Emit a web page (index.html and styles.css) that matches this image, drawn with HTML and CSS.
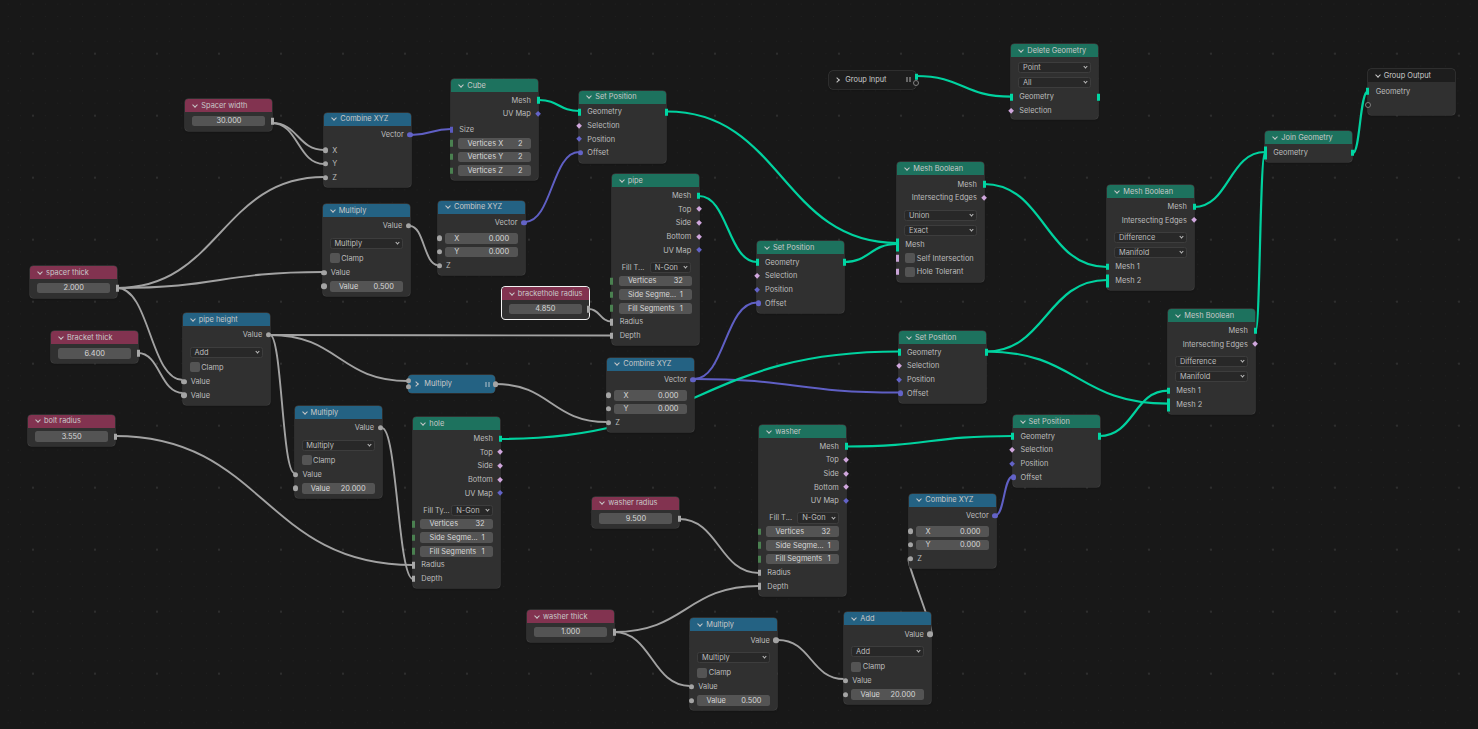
FILE: index.html
```html
<!DOCTYPE html>
<html lang="en">
<head>
<meta charset="utf-8">
<title>Geometry Nodes</title>
<link rel="stylesheet" href="styles.css">
</head>
<body>
<main class="canvas">
<svg class="wires" width="1478" height="729" viewBox="0 0 1478 729" fill="none">
  <g class="w-val">
    <path d="M272 123C298 123 298 150 324 150"/>
    <path d="M272 123C298 123 298 164 324 164"/>
    <path d="M117 288C220 288 221 177 324 177"/>
    <path d="M117 288C220 288 220 272 323 272"/>
    <path d="M117 288C150 288 150 380 183 380"/>
    <path d="M138 353C160 353 160 393 183 393"/>
    <path d="M270 335C440 335 440 335.500 612 335.500"/>
    <path d="M270 335C339 335 339 381 408 381"/>
    <path d="M270 335C282 335 282 473 294.500 473"/>
    <path d="M410 226C424 226 424 265 438 265"/>
    <path d="M382 428C397 428 398 579 413 579"/>
    <path d="M115 436C264 436 264 565 413 565"/>
    <path d="M589 309C600 309 600 321.500 612 321.500"/>
    <path d="M495 384C551 384 551 422 607 422"/>
    <path d="M679 519C719 519 719 573 759 573"/>
    <path d="M614 632C686 632 686 586 759 586"/>
    <path d="M614 632C652 632 652 686 690 686"/>
    <path d="M778 640C811 640 811 679 844 679"/>
    <path d="M931 634C936 634 904 558 909 558"/>
  </g>
  <g class="w-vec">
    <path d="M411 135C431 135 431 129 451 129"/>
    <path d="M525 222C552 222 552 152 579 152"/>
    <path d="M694 379C725 379 725 302.500 757 302.500"/>
    <path d="M694 379C796 379 796 392.500 899 392.500"/>
    <path d="M996 515C1004 515 1004 476.500 1012.500 476.500"/>
  </g>
  <g class="w-geo">
    <path d="M539 100C559 100 559 111 579.500 111"/>
    <path d="M667 111.500C782 111.500 782 243 897 243"/>
    <path d="M699 196C728 196 728 262 757 262"/>
    <path d="M844 262C870 262 870 244 897 244"/>
    <path d="M984 184C1045 184 1045 267 1107 267"/>
    <path d="M986 351.500C1046 351.500 1046 280 1107 280"/>
    <path d="M986 351.500C1077 351.500 1077 403.700 1168 403.700"/>
    <path d="M1099.500 436C1134 436 1134 390.700 1168 390.700"/>
    <path d="M500 439C700 439 700 351.500 899 351.500"/>
    <path d="M846 446.500C929 446.500 929 436 1012.500 436"/>
    <path d="M916 76C963 76 963 96.700 1011 96.700"/>
    <path d="M1194 207C1229 207 1229 152 1265 152"/>
    <path d="M1255.700 331C1260 331 1260 152 1265 152"/>
    <path d="M1353 153C1360 153 1360 91 1368 91"/>
  </g>
</svg>

<section class="node p-spacerw">
  <header class="hdr red"><i class="chev"></i>Spacer width</header>
  <div class="rows"><div class="row"><div class="field num">30.000</div><i class="s s-rect r"></i></div></div>
</section>

<section class="node p-comb1">
  <header class="hdr blue"><i class="chev"></i>Combine XYZ</header>
  <div class="rows">
    <div class="row out">Vector<i class="s s-vec r"></i></div>
    <div class="row in gap"><i class="s s-val l"></i>X</div>
    <div class="row in"><i class="s s-val l"></i>Y</div>
    <div class="row in"><i class="s s-val l"></i>Z</div>
  </div>
</section>

<section class="node p-mula">
  <header class="hdr blue"><i class="chev"></i>Multiply</header>
  <div class="rows">
    <div class="row out">Value<i class="s s-val r"></i></div>
    <div class="row tall gap"><div class="drop">Multiply<i class="arrow"></i></div></div>
    <div class="row tall in"><i class="box"></i>Clamp</div>
    <div class="row in"><i class="s s-val l"></i>Value</div>
    <div class="row"><i class="s s-val l"></i><div class="field pair"><span>Value</span><span>0.500</span></div></div>
  </div>
</section>

<section class="node p-spacert">
  <header class="hdr red"><i class="chev"></i>spacer thick</header>
  <div class="rows"><div class="row"><div class="field num">2.000</div><i class="s s-rect r"></i></div></div>
</section>

<section class="node p-bracket">
  <header class="hdr red"><i class="chev"></i>Bracket thick</header>
  <div class="rows"><div class="row"><div class="field num">6.400</div><i class="s s-rect r"></i></div></div>
</section>

<section class="node p-pipeh">
  <header class="hdr blue"><i class="chev"></i>pipe height</header>
  <div class="rows">
    <div class="row out">Value<i class="s s-val r"></i></div>
    <div class="row tall gap"><div class="drop">Add<i class="arrow"></i></div></div>
    <div class="row tall in"><i class="box"></i>Clamp</div>
    <div class="row in"><i class="s s-val l"></i>Value</div>
    <div class="row in"><i class="s s-val l"></i>Value</div>
  </div>
</section>

<section class="node p-bolt">
  <header class="hdr red"><i class="chev"></i>bolt radius</header>
  <div class="rows"><div class="row"><div class="field num">3.550</div><i class="s s-rect r"></i></div></div>
</section>

<section class="node p-mulb">
  <header class="hdr blue"><i class="chev"></i>Multiply</header>
  <div class="rows">
    <div class="row out">Value<i class="s s-val r"></i></div>
    <div class="row tall gap"><div class="drop">Multiply<i class="arrow"></i></div></div>
    <div class="row tall in"><i class="box"></i>Clamp</div>
    <div class="row in"><i class="s s-val l"></i>Value</div>
    <div class="row"><i class="s s-val l"></i><div class="field pair"><span>Value</span><span>20.000</span></div></div>
  </div>
</section>

<section class="node p-cube">
  <header class="hdr green"><i class="chev"></i>Cube</header>
  <div class="rows tight">
    <div class="row out">Mesh<i class="s s-geo r"></i></div>
    <div class="row out">UV Map<i class="s s-dia-b r"></i></div>
    <div class="row in gap">Size<i class="s s-rect-b l"></i></div>
    <div class="row"><i class="s s-int l"></i><div class="field pair"><span>Vertices X</span><span>2</span></div></div>
    <div class="row"><i class="s s-int l"></i><div class="field pair"><span>Vertices Y</span><span>2</span></div></div>
    <div class="row"><i class="s s-int l"></i><div class="field pair"><span>Vertices Z</span><span>2</span></div></div>
  </div>
</section>

<section class="node p-seta">
  <header class="hdr green"><i class="chev"></i>Set Position</header>
  <div class="rows tight">
    <div class="row in"><i class="s s-geo l"></i>Geometry<i class="s s-geo r"></i></div>
    <div class="row in"><i class="s s-dia l"></i>Selection</div>
    <div class="row in"><i class="s s-dia-b l"></i>Position</div>
    <div class="row in"><i class="s s-vec l"></i>Offset</div>
  </div>
</section>

<section class="node p-comb2">
  <header class="hdr blue"><i class="chev"></i>Combine XYZ</header>
  <div class="rows">
    <div class="row out">Vector<i class="s s-vec r"></i></div>
    <div class="row gap"><i class="s s-val l"></i><div class="field pair"><span>X</span><span>0.000</span></div></div>
    <div class="row"><i class="s s-val l"></i><div class="field pair"><span>Y</span><span>0.000</span></div></div>
    <div class="row in"><i class="s s-val l"></i>Z</div>
  </div>
</section>

<section class="node p-pipe">
  <header class="hdr green"><i class="chev"></i>pipe</header>
  <div class="rows tight">
    <div class="row out">Mesh<i class="s s-geo r"></i></div>
    <div class="row out">Top<i class="s s-dia r"></i></div>
    <div class="row out">Side<i class="s s-dia r"></i></div>
    <div class="row out">Bottom<i class="s s-dia r"></i></div>
    <div class="row out">UV Map<i class="s s-dia-b r"></i></div>
    <div class="row fill"><span class="fill-label">Fill T...</span><div class="drop fill-drop">N-Gon<i class="arrow"></i></div></div>
    <div class="row"><i class="s s-int l"></i><div class="field pair"><span>Vertices</span><span>32</span></div></div>
    <div class="row"><i class="s s-int l"></i><div class="field pair"><span>Side Segme...</span><span>1</span></div></div>
    <div class="row"><i class="s s-int l"></i><div class="field pair"><span>Fill Segments</span><span>1</span></div></div>
    <div class="row in"><i class="s s-rect l"></i>Radius</div>
    <div class="row in"><i class="s s-rect l"></i>Depth</div>
  </div>
</section>

<section class="node selected p-brack">
  <header class="hdr red"><i class="chev"></i>brackethole radius</header>
  <div class="rows"><div class="row"><div class="field num">4.850</div><i class="s s-rect r"></i></div></div>
</section>

<section class="node p-delete">
  <header class="hdr green"><i class="chev"></i>Delete Geometry</header>
  <div class="rows drops">
    <div class="row tall"><div class="drop">Point<i class="arrow"></i></div></div>
    <div class="row tall"><div class="drop">All<i class="arrow"></i></div></div>
    <div class="row in"><i class="s s-geo l"></i>Geometry<i class="s s-geo r"></i></div>
    <div class="row in"><i class="s s-dia l"></i>Selection</div>
  </div>
</section>

<section class="node collapsed dark p-ginput">
  <i class="chev right"></i><span class="cname">Group Input</span><span class="pause"></span>
  <i class="s s-geo gi-a"></i><i class="s s-hollow gi-b"></i>
</section>

<section class="node p-mba">
  <header class="hdr green"><i class="chev"></i>Mesh Boolean</header>
  <div class="rows">
    <div class="row out">Mesh<i class="s s-geo r"></i></div>
    <div class="row out">Intersecting Edges<i class="s s-dia r"></i></div>
    <div class="row tall gap"><div class="drop">Union<i class="arrow"></i></div></div>
    <div class="row tall"><div class="drop">Exact<i class="arrow"></i></div></div>
    <div class="row in"><i class="s s-multi l"></i>Mesh</div>
    <div class="row in"><i class="s s-bool l"></i><i class="box"></i>Self Intersection</div>
    <div class="row in"><i class="s s-bool l"></i><i class="box"></i>Hole Tolerant</div>
  </div>
</section>

<section class="node p-mbb">
  <header class="hdr green"><i class="chev"></i>Mesh Boolean</header>
  <div class="rows tight">
    <div class="row out">Mesh<i class="s s-geo r"></i></div>
    <div class="row out">Intersecting Edges<i class="s s-dia r"></i></div>
    <div class="row tall gap"><div class="drop">Difference<i class="arrow"></i></div></div>
    <div class="row tall"><div class="drop">Manifold<i class="arrow"></i></div></div>
    <div class="row in"><i class="s s-geo l"></i>Mesh 1</div>
    <div class="row in"><i class="s s-multi l"></i>Mesh 2</div>
  </div>
</section>

<section class="node p-mbc">
  <header class="hdr green"><i class="chev"></i>Mesh Boolean</header>
  <div class="rows tight">
    <div class="row out">Mesh<i class="s s-geo r"></i></div>
    <div class="row out">Intersecting Edges<i class="s s-dia r"></i></div>
    <div class="row tall gap"><div class="drop">Difference<i class="arrow"></i></div></div>
    <div class="row tall"><div class="drop">Manifold<i class="arrow"></i></div></div>
    <div class="row in"><i class="s s-geo l"></i>Mesh 1</div>
    <div class="row in"><i class="s s-multi l"></i>Mesh 2</div>
  </div>
</section>

<section class="node p-join">
  <header class="hdr green"><i class="chev"></i>Join Geometry</header>
  <div class="rows tight">
    <div class="row in"><i class="s s-multi l"></i>Geometry<i class="s s-geo r"></i></div>
  </div>
</section>

<section class="node p-goutput">
  <header class="hdr dark"><i class="chev"></i>Group Output</header>
  <div class="rows">
    <div class="row in"><i class="s s-geo l"></i>Geometry</div>
    <div class="row in"><i class="s s-hollow l"></i></div>
  </div>
</section>

<section class="node p-setb">
  <header class="hdr green"><i class="chev"></i>Set Position</header>
  <div class="rows tight">
    <div class="row in"><i class="s s-geo l"></i>Geometry<i class="s s-geo r"></i></div>
    <div class="row in"><i class="s s-dia l"></i>Selection</div>
    <div class="row in"><i class="s s-dia-b l"></i>Position</div>
    <div class="row in"><i class="s s-vec l"></i>Offset</div>
  </div>
</section>

<section class="node collapsed blue p-mulc">
  <i class="chev right"></i><span class="cname">Multiply</span><span class="pause"></span>
  <i class="s s-val ml-a"></i><i class="s s-val ml-b"></i><i class="s s-val ml-c"></i>
</section>

<section class="node p-hole">
  <header class="hdr green"><i class="chev"></i>hole</header>
  <div class="rows tight">
    <div class="row out">Mesh<i class="s s-geo r"></i></div>
    <div class="row out">Top<i class="s s-dia r"></i></div>
    <div class="row out">Side<i class="s s-dia r"></i></div>
    <div class="row out">Bottom<i class="s s-dia r"></i></div>
    <div class="row out">UV Map<i class="s s-dia-b r"></i></div>
    <div class="row fill"><span class="fill-label">Fill Ty...</span><div class="drop fill-drop">N-Gon<i class="arrow"></i></div></div>
    <div class="row"><i class="s s-int l"></i><div class="field pair"><span>Vertices</span><span>32</span></div></div>
    <div class="row"><i class="s s-int l"></i><div class="field pair"><span>Side Segme...</span><span>1</span></div></div>
    <div class="row"><i class="s s-int l"></i><div class="field pair"><span>Fill Segments</span><span>1</span></div></div>
    <div class="row in"><i class="s s-rect l"></i>Radius</div>
    <div class="row in"><i class="s s-rect l"></i>Depth</div>
  </div>
</section>

<section class="node p-comb3">
  <header class="hdr blue"><i class="chev"></i>Combine XYZ</header>
  <div class="rows">
    <div class="row out">Vector<i class="s s-vec r"></i></div>
    <div class="row gap"><i class="s s-val l"></i><div class="field pair"><span>X</span><span>0.000</span></div></div>
    <div class="row"><i class="s s-val l"></i><div class="field pair"><span>Y</span><span>0.000</span></div></div>
    <div class="row in"><i class="s s-val l"></i>Z</div>
  </div>
</section>

<section class="node p-washr">
  <header class="hdr red"><i class="chev"></i>washer radius</header>
  <div class="rows"><div class="row"><div class="field num">9.500</div><i class="s s-rect r"></i></div></div>
</section>

<section class="node p-setc">
  <header class="hdr green"><i class="chev"></i>Set Position</header>
  <div class="rows tight">
    <div class="row in"><i class="s s-geo l"></i>Geometry<i class="s s-geo r"></i></div>
    <div class="row in"><i class="s s-dia l"></i>Selection</div>
    <div class="row in"><i class="s s-dia-b l"></i>Position</div>
    <div class="row in"><i class="s s-vec l"></i>Offset</div>
  </div>
</section>

<section class="node p-setd">
  <header class="hdr green"><i class="chev"></i>Set Position</header>
  <div class="rows tight">
    <div class="row in"><i class="s s-geo l"></i>Geometry<i class="s s-geo r"></i></div>
    <div class="row in"><i class="s s-dia l"></i>Selection</div>
    <div class="row in"><i class="s s-dia-b l"></i>Position</div>
    <div class="row in"><i class="s s-vec l"></i>Offset</div>
  </div>
</section>

<section class="node p-washer">
  <header class="hdr green"><i class="chev"></i>washer</header>
  <div class="rows tight">
    <div class="row out">Mesh<i class="s s-geo r"></i></div>
    <div class="row out">Top<i class="s s-dia r"></i></div>
    <div class="row out">Side<i class="s s-dia r"></i></div>
    <div class="row out">Bottom<i class="s s-dia r"></i></div>
    <div class="row out">UV Map<i class="s s-dia-b r"></i></div>
    <div class="row fill"><span class="fill-label">Fill T...</span><div class="drop fill-drop">N-Gon<i class="arrow"></i></div></div>
    <div class="row"><i class="s s-int l"></i><div class="field pair"><span>Vertices</span><span>32</span></div></div>
    <div class="row"><i class="s s-int l"></i><div class="field pair"><span>Side Segme...</span><span>1</span></div></div>
    <div class="row"><i class="s s-int l"></i><div class="field pair"><span>Fill Segments</span><span>1</span></div></div>
    <div class="row in"><i class="s s-rect l"></i>Radius</div>
    <div class="row in"><i class="s s-rect l"></i>Depth</div>
  </div>
</section>

<section class="node p-washt">
  <header class="hdr red"><i class="chev"></i>washer thick</header>
  <div class="rows"><div class="row"><div class="field num">1.000</div><i class="s s-rect r"></i></div></div>
</section>

<section class="node p-muld">
  <header class="hdr blue"><i class="chev"></i>Multiply</header>
  <div class="rows">
    <div class="row out">Value<i class="s s-val r"></i></div>
    <div class="row tall gap"><div class="drop">Multiply<i class="arrow"></i></div></div>
    <div class="row tall in"><i class="box"></i>Clamp</div>
    <div class="row in"><i class="s s-val l"></i>Value</div>
    <div class="row"><i class="s s-val l"></i><div class="field pair"><span>Value</span><span>0.500</span></div></div>
  </div>
</section>

<section class="node p-comb4">
  <header class="hdr blue"><i class="chev"></i>Combine XYZ</header>
  <div class="rows">
    <div class="row out">Vector<i class="s s-vec r"></i></div>
    <div class="row gap"><i class="s s-val l"></i><div class="field pair"><span>X</span><span>0.000</span></div></div>
    <div class="row"><i class="s s-val l"></i><div class="field pair"><span>Y</span><span>0.000</span></div></div>
    <div class="row in"><i class="s s-val l"></i>Z</div>
  </div>
</section>

<section class="node p-add">
  <header class="hdr blue"><i class="chev"></i>Add</header>
  <div class="rows">
    <div class="row out">Value<i class="s s-val r"></i></div>
    <div class="row tall gap"><div class="drop">Add<i class="arrow"></i></div></div>
    <div class="row tall in"><i class="box"></i>Clamp</div>
    <div class="row in"><i class="s s-val l"></i>Value</div>
    <div class="row"><i class="s s-val l"></i><div class="field pair"><span>Value</span><span>20.000</span></div></div>
  </div>
</section>
</main>
</body>
</html>
```
FILE: styles.css
```css
* { box-sizing: border-box; }
html, body { margin: 0; padding: 0; background: #181818; }
body { width: 1478px; height: 729px; overflow: hidden; }

.canvas {
  position: relative;
  width: 1478px;
  height: 729px;
  overflow: hidden;
  background-color: #181818;
  background-image:
    radial-gradient(circle, #2e2e2e 0, #2e2e2e 1px, transparent 1.3px),
    radial-gradient(circle, #212121 0, #212121 .5px, transparent .8px);
  background-size: 62px 62px, 12.4px 12.4px;
  background-position: 2px 22.7px, 2px 22.7px;
  font: 7.4px/1 Inter, "Liberation Sans", sans-serif;
  color: #bdbdbd;
}

.wires { position: absolute; left: 0; top: 0; z-index: 0; }
.wires path { stroke-linecap: round; }
.w-val { stroke: #a2a2a2; stroke-width: 1.9; }
.w-vec { stroke: #5f5fc4; stroke-width: 2; }
.w-geo { stroke: #00d29f; stroke-width: 2.2; }

/* node shell */
.node {
  position: absolute;
  z-index: 1;
  width: 87px;
  background: #303030;
  border-radius: 3.5px;
  box-shadow: 0 0 0 .5px #474747, 0 1px 2px rgba(0,0,0,.35);
}
.node.selected { box-shadow: 0 0 0 1px #f2f2f2; }

.hdr {
  display: flex;
  align-items: center;
  height: 13px;
  padding-left: 16px;
  position: relative;
  border-radius: 3.5px 3.5px 0 0;
  color: #c9c9c9;
}
.red { background: #823350; }
.blue { background: #246283; }
.green { background: #1d725e; }
.dark { background: #1d1d1d; }

.chev {
  position: absolute;
  left: 8px;
  top: 3.500px;
  width: 4px;
  height: 4px;
  border-right: 1px solid #c8c8c8;
  border-bottom: 1px solid #c8c8c8;
  transform: rotate(45deg);
}
.chev.right { top: 7px; transform: rotate(-45deg); left: 6px; }

.rows { padding: 2.200px 0 2.800px; }
.rows.tight { padding-top: 1.500px; }
.rows.drops { padding-top: 3.200px; padding-bottom: 1.500px; }

.row {
  position: relative;
  display: flex;
  align-items: center;
  height: 13.670px;
}
.row.gap { margin-top: 2px; }
.row.tall { height: 15px; }
.row.tall.gap { margin-top: 3px; }
.row.out { justify-content: flex-end; padding-right: 7.500px; }
.row.in { padding-left: 8px; }
.row.fill { margin-top: 3.500px; }

.field {
  height: 10.800px;
  margin-left: 7.200px;
  width: 73px;
  background: #545454;
  border-radius: 2.500px;
  color: #d8d8d8;
  display: flex;
  align-items: center;
}
.field.num { justify-content: center; }
.field.pair { justify-content: space-between; padding: 0 9px; }

.drop {
  position: relative;
  height: 11.400px;
  margin-left: 7.200px;
  width: 73px;
  background: #282828;
  border: 1px solid #3d3d3d;
  border-radius: 2.500px;
  padding-left: 3.500px;
  display: flex;
  align-items: center;
}
.arrow {
  position: absolute;
  right: 3px;
  top: 2.500px;
  width: 3px;
  height: 3px;
  border-right: 1px solid #c0c0c0;
  border-bottom: 1px solid #c0c0c0;
  transform: rotate(45deg);
}

.fill-label { margin-left: 10px; width: 28px; flex: none; white-space: nowrap; }
.fill-drop { margin-left: 0; width: 41.500px; padding-left: 4px; }

.box {
  display: block;
  flex: none;
  width: 10px;
  height: 10px;
  margin-right: 1.500px;
  background: #545454;
  border-radius: 2px;
}
.row.tall.in { padding-left: 7px; }

/* sockets */
.s { position: absolute; top: 50%; transform: translateY(-50%); display: block; z-index: 2; }
.s-val, .s-vec { width: 5.400px; height: 5.400px; border-radius: 50%; }
.s-val { background: #a4a4a4; }
.s-vec { background: #6363c7; }
.s-val.l, .s-vec.l { left: -2.700px; }
.s-val.r, .s-vec.r { right: -2.700px; }

.s-rect, .s-rect-b, .s-geo, .s-int, .s-bool { width: 3px; height: 6.500px; }
.s-rect { background: #a8a8a8; }
.s-rect-b { background: #5a5ac0; }
.s-geo { background: #00d6a3; }
.s-int { background: #4a8050; }
.s-bool { background: #c9a4d6; }
.s-multi { width: 3px; height: 13px; background: #00d6a3; }

.s.l { left: -1.500px; }
.s.r { right: -1.500px; }

.s-dia, .s-dia-b { width: 4.200px; height: 4.200px; transform: translateY(-50%) rotate(45deg); }
.s-dia { background: #cfa6dc; }
.s-dia-b { background: #6363c7; }
.s-dia.l, .s-dia-b.l { left: -2.100px; }
.s-dia.r, .s-dia-b.r { right: -2.100px; }

.s-hollow { width: 6px; height: 6px; border-radius: 50%; border: 1px solid #808080; background: #1d1d1d; }
.s-hollow.l { left: -3px; }

/* collapsed nodes */
.collapsed { display: flex; align-items: center; border-radius: 4px; padding-left: 16px; }
.collapsed.dark { background: #1d1d1d; }
.cname { color: #c9c9c9; }
.pause {
  position: absolute;
  right: 5px;
  top: 6.500px;
  width: 5px;
  height: 5px;
  border-left: 2px solid #666;
  border-right: 2px solid #666;
}
.blue .pause { border-color: #6d93a8; }
.gi-a { top: 6px; right: -1.500px; }
.gi-b { top: 12.500px; right: -3px; }
.ml-a { top: 6px; left: -2.700px; }
.ml-b { top: 12px; left: -2.700px; }
.ml-c { top: 9.300px; right: -2.700px; }

/* positions on the free canvas */
.p-spacerw { left: 185.300px; top: 99px; }
.p-comb1 { left: 324.300px; top: 112.700px; }
.p-mula { left: 322.700px; top: 204px; }
.p-spacert { left: 30px; top: 266px; }
.p-bracket { left: 51px; top: 331.300px; }
.p-pipeh { left: 182.700px; top: 313px; }
.p-bolt { left: 28px; top: 414.600px; }
.p-mulb { left: 294.500px; top: 406px; }
.p-cube { left: 451.300px; top: 79px; }
.p-seta { left: 579.300px; top: 90.700px; }
.p-comb2 { left: 438px; top: 200.700px; }
.p-pipe { left: 611.700px; top: 174.300px; }
.p-brack { left: 501.700px; top: 287px; }
.p-delete { left: 1011.300px; top: 44px; }
.p-ginput { left: 829.300px; top: 70.700px; height: 18px; }
.p-mba { left: 897.300px; top: 162.300px; }
.p-mbb { left: 1107.300px; top: 185.300px; }
.p-mbc { left: 1168.300px; top: 309.300px; }
.p-join { left: 1265.300px; top: 131.300px; }
.p-goutput { left: 1367.700px; top: 69.300px; }
.p-setb { left: 757px; top: 241px; }
.p-mulc { left: 408.300px; top: 375px; height: 18.300px; }
.p-hole { left: 413.300px; top: 417.300px; }
.p-comb3 { left: 607.300px; top: 357.700px; }
.p-washr { left: 592.300px; top: 496.700px; }
.p-setc { left: 899px; top: 331px; }
.p-setd { left: 1012.500px; top: 415px; }
.p-washer { left: 759.300px; top: 425px; }
.p-washt { left: 527px; top: 610px; }
.p-muld { left: 690.300px; top: 618.300px; }
.p-comb4 { left: 909.300px; top: 493.700px; }
.p-add { left: 844.300px; top: 612.300px; }
```
